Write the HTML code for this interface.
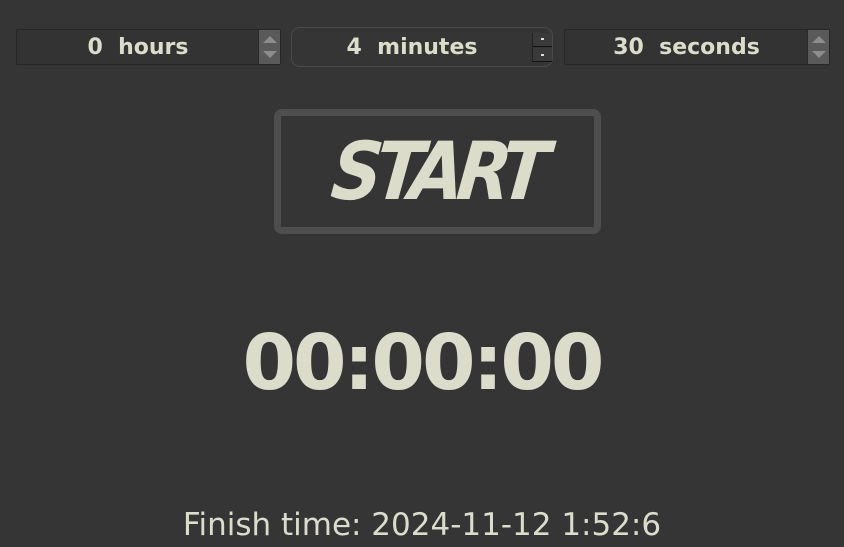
<!DOCTYPE html><html><head><style>
body{margin:0;width:844px;height:547px;background:#353535;overflow:hidden;position:relative;font-family:"DejaVu Sans","Liberation Sans",sans-serif;color:#dcdccb}
.sb{position:absolute;top:29px;height:34px;border:1px solid #262626;background:#333;box-sizing:content-box;border-radius:2px}
.sb .t{position:absolute;left:0;top:0;height:34px;line-height:35px;text-align:center;font-weight:bold;font-size:22px;white-space:pre}
.sp{position:absolute;right:0;top:0;width:21px;height:34px;background:#5a5a5a;border-left:1px solid #2a2a2a}
.up{position:absolute;left:4px;top:6px;border-left:7px solid transparent;border-right:7px solid transparent;border-bottom:7px solid #8c8c8c}
.dn{position:absolute;left:4px;top:21px;border-left:7px solid transparent;border-right:7px solid transparent;border-top:7px solid #8c8c8c}
</style></head><body>
<div class="sb" style="left:16px;width:263px"><div class="t" style="width:242px">0  hours</div><div class="sp"><div class="up"></div><div class="dn"></div></div></div>
<div style="position:absolute;left:291px;top:27px;width:260px;height:38px;border:1px solid #4a4a4a;border-radius:9px;background:#353535">
<div style="position:absolute;left:0;top:0;width:240px;line-height:39px;text-align:center;font-weight:bold;font-size:22px;white-space:pre">4  minutes</div>
<div style="position:absolute;left:240px;top:5px;width:19px;height:13px;background:#3a3a3a;border-bottom:1px solid #111;border-left:1px solid #222"><div style="position:absolute;left:8px;top:5px;width:3px;height:2px;background:#ddd"></div></div>
<div style="position:absolute;left:240px;top:20px;width:19px;height:13px;background:#3a3a3a;border-bottom:1px solid #111;border-left:1px solid #222"><div style="position:absolute;left:8px;top:6px;width:3px;height:2px;background:#ddd"></div></div>
</div>
<div class="sb" style="left:564px;width:264px"><div class="t" style="width:243px">30  seconds</div><div class="sp"><div class="up"></div><div class="dn"></div></div></div>
<div style="position:absolute;left:274px;top:109px;width:313px;height:111px;border:7px solid #4e4e4e;border-radius:8px"></div>
<div style="position:absolute;left:274px;top:109px;width:327px;height:125px;line-height:125px;text-align:center;font-family:'DejaVu Sans Condensed','DejaVu Sans',sans-serif;font-weight:bold;font-style:italic;font-size:80px;letter-spacing:-7px"><span style="display:inline-block;transform:skewX(-6deg) scaleX(0.97)">START</span></div>
<div style="position:absolute;left:0;width:844px;top:314px;text-align:center;font-weight:bold;font-size:77px;letter-spacing:-3px;line-height:100px">00:00:00</div>
<div style="position:absolute;left:0;width:844px;top:505px;text-align:center;font-size:31px;line-height:40px">Finish time: 2024-11-12 1:52:6</div>
</body></html>
